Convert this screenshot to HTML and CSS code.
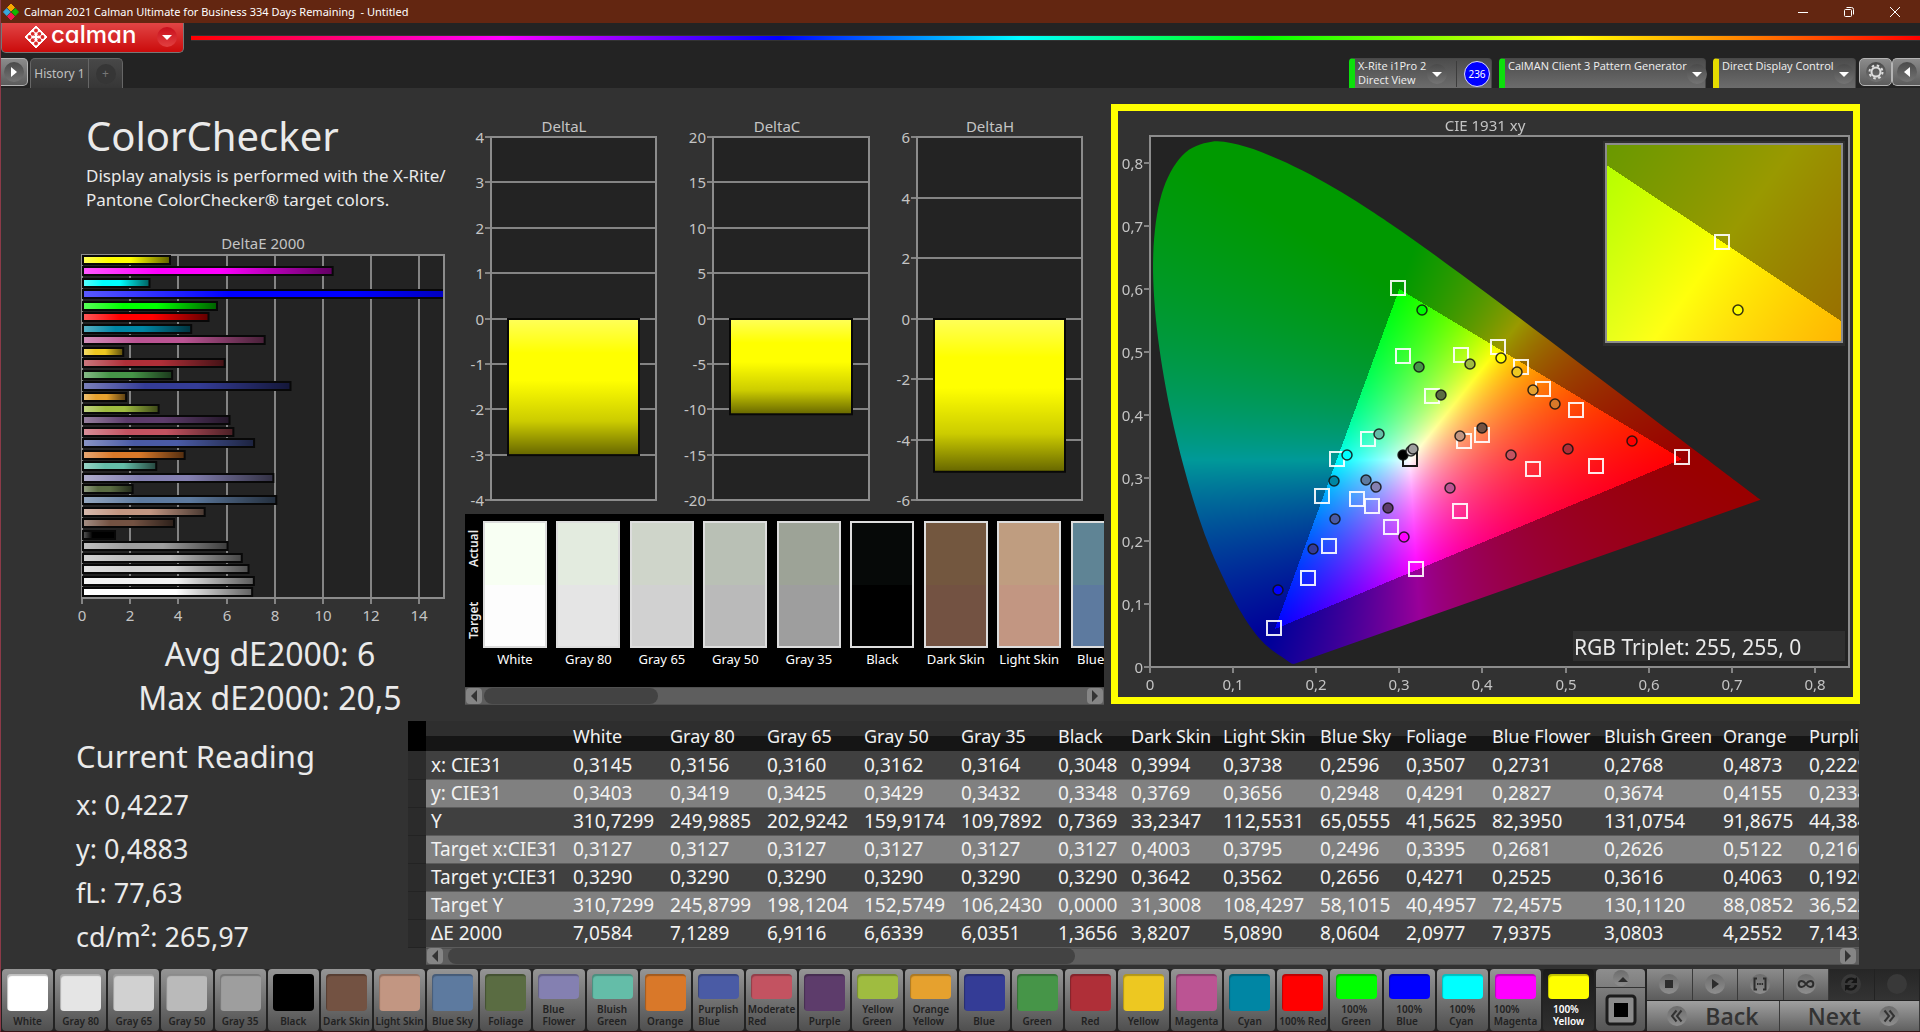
FILE: index.html
```html
<!DOCTYPE html>
<html lang="en">
<head>
<meta charset="utf-8">
<meta name="viewport" content="width=device-width, initial-scale=1">
<title>Calman 2021 Calman Ultimate for Business 334 Days Remaining - Untitled</title>
<link rel="stylesheet" href="styles.css">
</head>
<body>
<header class="titlebar">
  <svg class="app-icon" viewBox="0 0 16 16" aria-hidden="true">
    <path d="M8 0l3.500 3.500L8 7 4.500 3.500z" fill="#f5a800" stroke="#f5a800" stroke-linejoin="round"/>
    <path d="M3.800 4.500L7.300 8l-3.500 3.500L.5 8z" fill="#38a8e0" stroke="#38a8e0" stroke-linejoin="round"/>
    <path d="M12.200 4.500L15.500 8l-3.300 3.500L8.700 8z" fill="#0fb800" stroke="#0fb800" stroke-linejoin="round"/>
    <path d="M8 9l3.500 3.500L8 16l-3.500-3.500z" fill="#f01850" stroke="#f01850" stroke-linejoin="round"/>
  </svg>
  <span class="title">Calman 2021 Calman Ultimate for Business 334 Days Remaining &nbsp;- Untitled</span>
  <div class="window-buttons">
    <button aria-label="Minimize"><svg viewBox="0 0 12 12"><path d="M1 6.500h10"/></svg></button>
    <button aria-label="Restore"><svg viewBox="0 0 12 12"><rect x="1.500" y="3.500" width="7" height="7" rx="1"/><path d="M3.500 1.500h5a2 2 0 0 1 2 2v5"/></svg></button>
    <button aria-label="Close"><svg viewBox="0 0 12 12"><path d="M1 1l10 10M11 1L1 11"/></svg></button>
  </div>
</header>

<div class="topbar">
  <div class="brand-row">
    <button class="brand" aria-label="Calman menu">
      <svg class="brand-mark" viewBox="0 0 24 24" aria-hidden="true">
        <path d="M12 1l11 11-11 11L1 12z" fill="#fff" stroke="#fff" stroke-linejoin="round"/>
        <g fill="#da2a2a"><circle cx="12" cy="5.500" r="1.900"/><circle cx="5.500" cy="12" r="1.900"/><circle cx="18.500" cy="12" r="1.900"/><circle cx="12" cy="18.500" r="1.900"/></g>
        <path d="M8.700 8.800l6.600 6.400M15.300 8.800l-6.600 6.400" stroke="#da2a2a" stroke-width="1"/>
        <g fill="#da2a2a"><circle cx="8.700" cy="8.800" r="1.900"/><circle cx="15.300" cy="8.800" r="1.900"/><circle cx="8.700" cy="15.200" r="1.900"/><circle cx="15.300" cy="15.200" r="1.900"/></g>
        <circle cx="12" cy="12" r="1.900" fill="#fff"/>
      </svg>
      <span class="wordmark">calman</span>
      <span class="knob knob-red"><svg viewBox="0 0 20 20"><path d="M5 8h10l-5 5z"/></svg></span>
    </button>
    <div class="spectrum"></div>
  </div>
  <nav class="tab-row">
    <button class="side-button" aria-label="Expand"><span class="knob"><svg viewBox="0 0 20 20"><path d="M7 5v10l6-5z"/></svg></span></button>
    <div class="history">
      <button class="history-tab">History 1</button>
      <button class="history-add" aria-label="Add history"><span class="knob knob-dark">+</span></button>
    </div>
    <div class="devices">
      <div class="device device-meter">
        <span class="device-name">X-Rite i1Pro 2<br>Direct View</span>
        <button class="knob" aria-label="Meter menu"><svg viewBox="0 0 20 20"><path d="M5 8h10l-5 5z"/></svg></button>
        <span class="divider"></span>
        <span class="counter">236</span>
      </div>
      <div class="device device-source">
        <span class="device-name">CalMAN Client 3 Pattern Generator</span>
        <button class="knob" aria-label="Source menu"><svg viewBox="0 0 20 20"><path d="M5 8h10l-5 5z"/></svg></button>
      </div>
      <div class="device device-display">
        <span class="device-name">Direct Display Control</span>
        <button class="knob" aria-label="Display menu"><svg viewBox="0 0 20 20"><path d="M5 8h10l-5 5z"/></svg></button>
      </div>
      <button class="side-button" aria-label="Settings"><span class="knob"><svg viewBox="0 0 20 20"><circle cx="10" cy="10" r="4.500" fill="none" stroke="#ddd" stroke-width="2"/><circle cx="10" cy="10" r="6.500" fill="none" stroke="#ddd" stroke-width="2" stroke-dasharray="2.500 2.600"/></svg></span></button>
      <button class="side-button" aria-label="Collapse"><span class="knob"><svg viewBox="0 0 20 20"><path d="M13 5v10l-6-5z"/></svg></span></button>
    </div>
  </nav>
</div>

<main>
  <div class="analysis">
    <section class="summary">
      <h1>ColorChecker</h1>
      <p class="lead">Display analysis is performed with the X-Rite/<br>Pantone ColorChecker® target colors.</p>
      <svg class="delta-e" id="delta-e" viewBox="60 230 400 400" role="img" aria-label="DeltaE 2000">
        <defs>
          <linearGradient id="gloss-h"><stop offset="0" stop-color="#fff" stop-opacity=".35"/><stop offset=".3" stop-color="#fff" stop-opacity="0"/><stop offset=".55" stop-color="#000" stop-opacity="0"/><stop offset="1" stop-color="#000" stop-opacity=".62"/></linearGradient>
          <linearGradient id="gloss-v" x2="0" y2="1"><stop offset="0" stop-color="#fff" stop-opacity=".35"/><stop offset=".25" stop-color="#fff" stop-opacity="0"/><stop offset=".45" stop-color="#000" stop-opacity="0"/><stop offset=".75" stop-color="#000" stop-opacity=".2"/><stop offset="1" stop-color="#000" stop-opacity=".6"/></linearGradient>
          <clipPath id="plot-area"><rect x="82" y="254" width="361" height="346"/></clipPath>
        </defs>
        <text class="chart-title" x="263" y="249">DeltaE 2000</text>
      </svg>
      <div class="stats">
        <p>Avg dE2000: 6</p>
        <p>Max dE2000: 20,5</p>
      </div>
    </section>

    <section class="deltas">
      <div class="delta-charts">
        <svg class="delta" viewBox="465 112 213 396" data-left="491" data-right="656" data-max="4" data-step="1" data-value="-3" data-title="DeltaL" data-title-x="564"></svg>
        <svg class="delta" viewBox="678 112 213 396" data-left="713" data-right="869" data-max="20" data-step="5" data-value="-10.500" data-title="DeltaC" data-title-x="777"></svg>
        <svg class="delta" viewBox="891 112 213 396" data-left="917" data-right="1082" data-max="6" data-step="2" data-value="-5.050" data-title="DeltaH" data-title-x="990"></svg>
      </div>
      <div class="comparison">
        <div class="strip">
          <div class="strip-axis"><span>Target</span><span>Actual</span></div>
          <figure><div class="pair" style="--actual:#f8fff3;--target:#fdfdfd"></div><figcaption>White</figcaption></figure>
          <figure><div class="pair" style="--actual:#e3ebdf;--target:#e5e5e5"></div><figcaption>Gray 80</figcaption></figure>
          <figure><div class="pair" style="--actual:#cfd5ca;--target:#d1d1d1"></div><figcaption>Gray 65</figcaption></figure>
          <figure><div class="pair" style="--actual:#b9c0b5;--target:#bababa"></div><figcaption>Gray 50</figcaption></figure>
          <figure><div class="pair" style="--actual:#9da397;--target:#9e9e9e"></div><figcaption>Gray 35</figcaption></figure>
          <figure><div class="pair" style="--actual:#060908;--target:#000"></div><figcaption>Black</figcaption></figure>
          <figure><div class="pair" style="--actual:#73573f;--target:#735242"></div><figcaption>Dark Skin</figcaption></figure>
          <figure><div class="pair" style="--actual:#bf9d80;--target:#c29682"></div><figcaption>Light Skin</figcaption></figure>
          <figure><div class="pair" style="--actual:#5f8495;--target:#5d7a9f"></div><figcaption>Blue Sky</figcaption></figure>
        </div>
        <div class="scrollbar scroll-strip">
          <button aria-label="Scroll left"><svg viewBox="0 0 16 16"><path d="M11 2v12L5 8z"/></svg></button>
          <span class="track"><span class="thumb"></span></span>
          <button aria-label="Scroll right"><svg viewBox="0 0 16 16"><path d="M5 2v12l6-6z"/></svg></button>
        </div>
      </div>
    </section>

    <section class="cie">
      <div class="cie-frame">
        <canvas class="cie-layer" id="gamut" width="735" height="586"></canvas>
        <svg class="cie-layer" id="cie" viewBox="1118 111 735 586" role="img" aria-label="CIE 1931 xy"></svg>
      </div>
    </section>
  </div>

  <div class="readings">
    <section class="current">
      <h2>Current Reading</h2>
      <p>x: 0,4227</p>
      <p>y: 0,4883</p>
      <p>fL: 77,63</p>
      <p>cd/m²: 265,97</p>
    </section>
    <section class="data">
      <div class="data-clip">
        <table>
          <colgroup><col class="w-sel"><col class="w-label"><col class="w-gray"><col class="w-gray"><col class="w-gray"><col class="w-gray"><col class="w-gray"><col class="w-black"><col class="w-dark"><col class="w-gray"><col class="w-short"><col class="w-short"><col class="w-flower"><col class="w-green"><col class="w-short"><col class="w-rest"></colgroup>
          <thead>
            <tr><th class="sel"></th><th></th><th>White</th><th>Gray 80</th><th>Gray 65</th><th>Gray 50</th><th>Gray 35</th><th>Black</th><th>Dark Skin</th><th>Light Skin</th><th>Blue Sky</th><th>Foliage</th><th>Blue Flower</th><th>Bluish Green</th><th>Orange</th><th>Purplish Blue</th></tr>
          </thead>
          <tbody>
            <tr><td class="sel"></td><th scope="row">x: CIE31</th><td>0,3145</td><td>0,3156</td><td>0,3160</td><td>0,3162</td><td>0,3164</td><td>0,3048</td><td>0,3994</td><td>0,3738</td><td>0,2596</td><td>0,3507</td><td>0,2731</td><td>0,2768</td><td>0,4873</td><td>0,2229</td></tr>
            <tr><td class="sel"></td><th scope="row">y: CIE31</th><td>0,3403</td><td>0,3419</td><td>0,3425</td><td>0,3429</td><td>0,3432</td><td>0,3348</td><td>0,3769</td><td>0,3656</td><td>0,2948</td><td>0,4291</td><td>0,2827</td><td>0,3674</td><td>0,4155</td><td>0,2334</td></tr>
            <tr><td class="sel"></td><th scope="row">Y</th><td>310,7299</td><td>249,9885</td><td>202,9242</td><td>159,9174</td><td>109,7892</td><td>0,7369</td><td>33,2347</td><td>112,5531</td><td>65,0555</td><td>41,5625</td><td>82,3950</td><td>131,0754</td><td>91,8675</td><td>44,3840</td></tr>
            <tr><td class="sel"></td><th scope="row">Target x:CIE31</th><td>0,3127</td><td>0,3127</td><td>0,3127</td><td>0,3127</td><td>0,3127</td><td>0,3127</td><td>0,4003</td><td>0,3795</td><td>0,2496</td><td>0,3395</td><td>0,2681</td><td>0,2626</td><td>0,5122</td><td>0,2160</td></tr>
            <tr><td class="sel"></td><th scope="row">Target y:CIE31</th><td>0,3290</td><td>0,3290</td><td>0,3290</td><td>0,3290</td><td>0,3290</td><td>0,3290</td><td>0,3642</td><td>0,3562</td><td>0,2656</td><td>0,4271</td><td>0,2525</td><td>0,3616</td><td>0,4063</td><td>0,1920</td></tr>
            <tr><td class="sel"></td><th scope="row">Target Y</th><td>310,7299</td><td>245,8799</td><td>198,1204</td><td>152,5749</td><td>106,2430</td><td>0,0000</td><td>31,3008</td><td>108,4297</td><td>58,1015</td><td>40,4957</td><td>72,4575</td><td>130,1120</td><td>88,0852</td><td>36,5220</td></tr>
            <tr><td class="sel"></td><th scope="row">ΔE 2000</th><td>7,0584</td><td>7,1289</td><td>6,9116</td><td>6,6339</td><td>6,0351</td><td>1,3656</td><td>3,8207</td><td>5,0890</td><td>8,0604</td><td>2,0977</td><td>7,9375</td><td>3,0803</td><td>4,2552</td><td>7,1432</td></tr>
          </tbody>
        </table>
      </div>
      <div class="scrollbar scroll-table">
        <button aria-label="Scroll left"><svg viewBox="0 0 16 16"><path d="M11 2v12L5 8z"/></svg></button>
        <span class="track"><span class="thumb"></span></span>
        <button aria-label="Scroll right"><svg viewBox="0 0 16 16"><path d="M5 2v12l6-6z"/></svg></button>
      </div>
    </section>
  </div>
</main>

<footer>
  <div class="patches">
    <button class="patch"><i style="--c:#fff"></i><span>White</span></button>
    <button class="patch"><i style="--c:#e5e5e5"></i><span>Gray 80</span></button>
    <button class="patch"><i style="--c:#d1d1d1"></i><span>Gray 65</span></button>
    <button class="patch"><i style="--c:#bababa"></i><span>Gray 50</span></button>
    <button class="patch"><i style="--c:#9e9e9e"></i><span>Gray 35</span></button>
    <button class="patch"><i style="--c:#000"></i><span>Black</span></button>
    <button class="patch"><i style="--c:#735242"></i><span>Dark Skin</span></button>
    <button class="patch"><i style="--c:#c29682"></i><span>Light Skin</span></button>
    <button class="patch"><i style="--c:#5d7a9f"></i><span>Blue Sky</span></button>
    <button class="patch"><i style="--c:#5a6c42"></i><span>Foliage</span></button>
    <button class="patch"><i style="--c:#8480b1"></i><span>Blue<br>Flower</span></button>
    <button class="patch"><i style="--c:#64bda8"></i><span>Bluish<br>Green</span></button>
    <button class="patch"><i style="--c:#d97829"></i><span>Orange</span></button>
    <button class="patch"><i style="--c:#4a5ba5"></i><span>Purplish<br>Blue</span></button>
    <button class="patch"><i style="--c:#c35361"></i><span>Moderate<br>Red</span></button>
    <button class="patch"><i style="--c:#5d3c6b"></i><span>Purple</span></button>
    <button class="patch"><i style="--c:#9fbc40"></i><span>Yellow<br>Green</span></button>
    <button class="patch"><i style="--c:#e6a12e"></i><span>Orange<br>Yellow</span></button>
    <button class="patch"><i style="--c:#343c96"></i><span>Blue</span></button>
    <button class="patch"><i style="--c:#469548"></i><span>Green</span></button>
    <button class="patch"><i style="--c:#af2f38"></i><span>Red</span></button>
    <button class="patch"><i style="--c:#edc821"></i><span>Yellow</span></button>
    <button class="patch"><i style="--c:#bb5493"></i><span>Magenta</span></button>
    <button class="patch"><i style="--c:#0086a4"></i><span>Cyan</span></button>
    <button class="patch"><i style="--c:#f00"></i><span>100% Red</span></button>
    <button class="patch"><i style="--c:#0f0"></i><span>100%<br>Green</span></button>
    <button class="patch"><i style="--c:#00f"></i><span>100%<br>Blue</span></button>
    <button class="patch"><i style="--c:#0ff"></i><span>100%<br>Cyan</span></button>
    <button class="patch"><i style="--c:#f0f"></i><span>100%<br>Magenta</span></button>
    <button class="patch selected"><i style="--c:#ff0"></i><span>100%<br>Yellow</span></button>
  </div>
  <div class="window-picker">
    <button class="picker-up" aria-label="Show patterns"><span class="knob"><svg viewBox="0 0 20 20"><path d="M5 12h10l-5-5z"/></svg></span></button>
    <button class="picker-size" aria-label="Pattern window"><svg viewBox="0 0 32 32"><rect x="2" y="2" width="28" height="28" rx="3" fill="#8b8b8b" stroke="#1c1c1c" stroke-width="3"/><rect x="9" y="9" width="14" height="14" fill="#000"/></svg></button>
  </div>
  <div class="transport">
    <div class="transport-row">
      <button aria-label="Stop"><span class="knob"><svg viewBox="0 0 20 20"><path d="M6 6h8v8H6z"/></svg></span></button>
      <button aria-label="Play"><span class="knob"><svg viewBox="0 0 20 20"><path d="M7 5v10l7-5z"/></svg></span></button>
      <button aria-label="Read series"><span class="knob"><svg viewBox="0 0 20 20"><path d="M7 4.500H4.500v11H7M13 4.500h2.500v11H13M7 10h1.500M9.300 10h1.500M11.600 10h1.500" fill="none" stroke="#2c2c2c" stroke-width="2"/></svg></span></button>
      <button aria-label="Continuous"><span class="knob"><svg viewBox="0 0 20 20"><path d="M10 10c-2-2.600-3-3-4.300-3a3 3 0 0 0 0 6C7 13 8 12.600 10 10s3-3 4.300-3a3 3 0 0 1 0 6C13 13 12 12.600 10 10z" fill="none" stroke="#2c2c2c" stroke-width="2"/></svg></span></button>
      <button class="off" aria-label="Refresh" disabled><span class="knob"><svg viewBox="0 0 20 20"><path d="M5 9a5.500 5.500 0 0 1 9-3M15 11a5.500 5.500 0 0 1-9 3" fill="none" stroke="#151515" stroke-width="2.400"/><path d="M16 3v6h-6zM4 17v-6h6z" fill="#151515"/></svg></span></button>
      <button class="off" aria-label="Unused" disabled><span class="knob"></span></button>
    </div>
    <div class="transport-row nav">
      <button><span class="knob"><svg viewBox="0 0 20 20"><path d="M9.500 4.500L5 10l4.500 5.500M14.500 4.500L10 10l4.500 5.500" fill="none" stroke="#333" stroke-width="2"/></svg></span>Back</button>
      <button>Next<span class="knob"><svg viewBox="0 0 20 20"><path d="M5.500 4.500L10 10l-4.500 5.500M10.500 4.500L15 10l-4.500 5.500" fill="none" stroke="#333" stroke-width="2"/></svg></span></button>
    </div>
  </div>
</footer>
<script src="charts.js"></script>
</body>
</html>
```
FILE: styles.css
```css
* { box-sizing: border-box; margin: 0; padding: 0; }
html { background: #232323; }
body {
  min-height: 100vh;
  display: flex;
  flex-direction: column;
  border-left: 1px solid #8c3a48;
  border-bottom: 1px solid #3a1216;
  background: #323232;
  color: #eaeaea;
  font-family: "Noto Sans", "Open Sans", sans-serif;
  overflow-x: hidden;
}
button { font: inherit; color: inherit; border: 0; background: none; }
svg { display: block; }

/* window title */
.titlebar { display: flex; align-items: center; height: 23px; padding-left: 2px; background: #632611; color: #fff; }
.app-icon { width: 16px; height: 16px; }
.title { flex: 1; margin-left: 5px; font: 11px/20px "Noto Sans", sans-serif; }
.window-buttons { display: flex; padding-right: 2px; }
.window-buttons button { width: 46px; height: 20px; display: grid; place-items: center; }
.window-buttons svg { width: 12px; height: 12px; fill: none; stroke: #fff; }

/* round glossy knobs */
.knob {
  flex: none; display: grid; place-items: center;
  width: 20px; height: 20px; border-radius: 50%;
  background: linear-gradient(#4a4a4a, #747474);
}
.knob svg { width: 20px; height: 20px; fill: #fff; }
.knob-red { background: linear-gradient(#c80f1c, #e24040); }
.knob-dark { background: #363636; color: #777; font-size: 12px; line-height: 20px; }

/* brand and tabs */
.topbar { background: #232323; }
.brand-row { display: flex; height: 35px; }
.brand {
  display: flex; align-items: center; gap: 3px;
  width: 183px; height: 30px; padding: 0 6px 2px 22px;
  background: linear-gradient(#e14545, #cb0b0b);
  border: 1px solid #777; border-top: 0; border-radius: 0 0 5px 5px;
}
.brand-mark { width: 24px; height: 24px; }
.wordmark { flex: 1; text-align: left; color: #fff; font: 500 24px/24px Inter, sans-serif; font-feature-settings: "cv11"; padding-bottom: 3px; }
.spectrum {
  flex: 1; height: 6px; margin: 12px 0 0 7px;
  border: solid #333; border-width: 1px 0;
  background: linear-gradient(90deg, #f00, #f0f 18%, #00f 34%, #0ff 48%, #0f0 62%, #ff0 80%, #f00);
}
.tab-row { display: flex; height: 30px; }
.side-button {
  display: grid; place-items: center; width: 28px; height: 28px;
  border: 1px solid #b4b4b4; border-radius: 5px; background: linear-gradient(#8b8b8b, #5c5c5c);
}
.tab-row > .side-button { border-left: 0; border-radius: 0 5px 5px 0; width: 27px; }
.history { display: flex; margin-left: 2px; border: 1px solid #666; border-bottom: 0; border-radius: 5px 5px 0 0; background: linear-gradient(#484848, #363636); }
.history-tab { width: 58px; font-size: 12px; color: #c0c0c0; border-right: 1px solid #666; }
.history-add { width: 33px; display: grid; place-items: center; }
.devices { display: flex; margin-left: auto; }
.device {
  display: flex; align-items: center; margin-right: 7px; padding-right: 5px;
  border: 1px solid #484848; border-bottom: 0; border-left: 6px solid #0ce00c; border-radius: 4px 4px 0 0;
  background: linear-gradient(#4c4c4c, #6c6c6c);
}
.device-name { align-self: flex-start; flex: 1; padding-left: 3px; font: 11px/14px "Open Sans", sans-serif; color: #f0f0f0; white-space: nowrap; }
.device-meter { width: 143px; padding-right: 1px; }
.device-source { width: 207px; }
.device-display { width: 143px; border-left-color: #e6dc00; margin-right: 3px; }
.divider { width: 1px; height: 26px; margin-left: 9px; background: #3c3c3c; }
.counter {
  width: 26px; height: 26px; margin-left: 7px; border: 1px solid #d8d8ff; border-radius: 50%;
  background: #00f; color: #fff; font-size: 10px; line-height: 24px; text-align: center;
}
.devices .side-button { width: 33px; }
.devices .side-button:last-child { border-right: 0; border-radius: 5px 0 0 5px; width: 28px; }

/* upper workspace */
main { flex: 1; padding-bottom: 4px; }
.analysis { display: grid; grid-template-columns: 464fr 639fr 756fr; padding-right: 60px; }
.analysis > * { min-width: 0; }
.summary { padding-top: 24px; }
h1 { padding-left: 85px; font-size: 40px; line-height: 48px; font-weight: 400; }
.lead { margin-top: 4px; padding-left: 85px; font-size: 17px; line-height: 24px; white-space: nowrap; }
.delta-e { width: calc(100% - 64px); margin: 18px 0 0 59px; }
.stats { padding: 2px 0 1px 74px; text-align: center; font-size: 32px; line-height: 44px; }
.chart-title { font-size: 15px; fill: #c4c4c4; text-anchor: middle; }
.tick { font-size: 15px; fill: #c4c4c4; }
.triplet { font-size: 21px; fill: #eaeaea; }
.middle { text-anchor: middle; }
.end { text-anchor: end; }
.plot { fill: #232323; }
.frame { fill: none; stroke: #8c8c8c; stroke-width: 2; }
.grid { stroke: #848484; stroke-width: 2; }

.deltas { padding-top: 24px; }
.delta-charts { display: grid; grid-template-columns: repeat(3, 1fr); }
.delta { width: 100%; }
.comparison { margin-top: 6px; }
.strip { display: flex; height: 173px; padding-top: 7px; background: #000; overflow: hidden; }
.strip-axis { flex: none; display: flex; width: 18px; height: 127px; padding: 9px 0; justify-content: space-between; writing-mode: vertical-rl; transform: rotate(180deg); font: 600 12px/18px "Noto Sans", sans-serif; }
.strip figure { flex: none; width: 10%; margin-right: 1.5%; }
.pair { height: 127px; border: 2px solid #ddd; background: linear-gradient(var(--actual) 50%, var(--target) 50%); }
.strip figcaption { display: flex; justify-content: center; font-size: 13px; line-height: 23px; color: #fff; white-space: nowrap; }

.scrollbar { display: flex; align-items: center; gap: 2px; height: 18px; padding: 0 1px; background: #5e5e5e; border: solid #505050; border-width: 1px 0; }
.scrollbar button { width: 16px; height: 16px; border-radius: 4px; background: #858585; }
.scrollbar svg { width: 16px; height: 16px; fill: #333; }
.track { flex: 1; }
.thumb { display: block; height: 16px; border-radius: 8px; background: #434343; }
.scroll-strip .thumb { width: 29%; }
.scroll-table { height: 17px; margin-left: 18px; padding-right: 3px; }
.scroll-table .thumb { width: 45%; margin-left: 3px; }

.cie { padding: 16px 0 0 7px; }
.cie-frame { display: grid; border: 7px solid #ff0; background: #323232; }
.cie-layer { grid-area: 1 / 1; width: 100%; height: auto; }

/* lower workspace */
.readings { display: grid; grid-template-columns: 407fr 1451fr; padding-right: 61px; }
.readings > * { min-width: 0; }
.current { padding: 13px 0 0 75px; font-size: 27px; line-height: 44px; }
.current h2 { margin-bottom: 5px; font-size: 31px; font-weight: 400; }
.data-clip { overflow: hidden; }
table { width: 1484px; table-layout: fixed; border-collapse: collapse; font-size: 19px; color: #f2f2f2; }
.w-sel { width: 18px; }
.w-label { width: 142px; }
.w-gray { width: 97px; }
.w-black { width: 73px; }
.w-dark { width: 92px; }
.w-short { width: 86px; }
.w-flower { width: 112px; }
.w-green { width: 119px; }
.w-rest { width: 88px; }
th, td { height: 28px; padding-left: 5px; line-height: 24px; text-align: left; font-weight: 400; white-space: nowrap; }
thead th { height: 30px; font-size: 18px; background: linear-gradient(#2e2e2e 50%, #151515 50%); }
thead .sel { background: #000; }
tbody tr { background: #404040; border-bottom: 1px solid #5c5c5c; }
tbody tr:nth-child(even) { background: #808080; }
tbody .sel { background: #2b2b2b; border-bottom: 1px solid #232323; }

/* pattern bar */
footer { display: flex; gap: 2px; height: 62px; background: #232323; padding-left: 1px; }
.patches { flex: 1593; display: grid; grid-template-columns: repeat(30, minmax(0, 1fr)); gap: 2px; }
.patch {
  display: flex; flex-direction: column; align-items: center; gap: 4px; height: 62px; padding: 5px 0 4px;
  border-radius: 4px; background: linear-gradient(#959595, #4f4f4f);
  color: #222; font-size: 10px; font-weight: 600; line-height: 12px; white-space: nowrap;
}
.patch i { flex: 1; width: 41px; border-radius: 4px; background: var(--c); box-shadow: inset 1px 2px 1px rgba(0, 0, 0, .25); }
.patch span { text-align: left; }
.patch.selected { background: linear-gradient(#1a1a1a, #303030); color: #fff; }
.window-picker { flex: 49; display: flex; flex-direction: column; border-radius: 4px; overflow: hidden; background: linear-gradient(#8e8e8e, #555); }
.picker-up { height: 19px; display: grid; place-items: center; border-bottom: 1px solid #333; }
.picker-up .knob { width: 16px; height: 16px; }
.picker-size { flex: 1; display: grid; place-items: center; }
.picker-size svg { width: 32px; height: 32px; }
.transport { flex: 273; display: flex; flex-direction: column; gap: 1px; }
.transport-row { flex: 1; display: flex; }
.transport-row button { flex: 1; display: grid; place-items: center; background: linear-gradient(#8c8c8c, #5c5c5c); border-right: 1px solid #3a3a3a; }
.transport-row .off { background: linear-gradient(#262626, #333); border-right-color: #222; }
.window-picker .knob, .transport .knob { background: linear-gradient(#6c6c6c, #8e8e8e); }
.window-picker .knob svg, .transport .knob svg { fill: #2c2c2c; }
.transport .off .knob { background: #393939; }
.transport .nav button { display: flex; align-items: center; justify-content: center; gap: 18px; font: 600 23px/28px "Open Sans", sans-serif; color: #333; background: linear-gradient(#a0a0a0, #606060); }
.transport .nav button:last-child { padding-left: 8px; }
```
FILE: charts.js
```js
const NS = "http://www.w3.org/2000/svg";
function add(parent, name, attrs, text) {
  const node = document.createElementNS(NS, name);
  for (const key in attrs) node.setAttribute(key, attrs[key]);
  if (text !== undefined) node.textContent = text;
  parent.appendChild(node);
  return node;
}

/* DeltaE 2000 per patch, top to bottom */
const deltaE = [
  [3.65, "#ff0"], [10.4, "#f0f"], [2.8, "#0ff"], [20.5, "#00f"], [5.6, "#0f0"], [5.25, "#f00"],
  [4.53, "#0086a4"], [7.58, "#bb5493"], [1.71, "#edc821"], [5.92, "#af2f38"], [3.74, "#469548"],
  [8.65, "#343c96"], [1.83, "#e6a12e"], [3.18, "#9fbc40"], [6.12, "#5d3c6b"], [6.28, "#c35361"],
  [7.14, "#4a5ba5"], [4.26, "#d97829"], [3.08, "#64bda8"], [7.94, "#8480b1"], [2.1, "#5a6c42"],
  [8.06, "#5d7a9f"], [5.09, "#c29682"], [3.82, "#735242"], [1.37, "#000"], [6.04, "#9e9e9e"],
  [6.63, "#bababa"], [6.91, "#d1d1d1"], [7.13, "#f0f0f0"], [7.06, "#fff"]
];
(function drawDeltaE() {
  const svg = document.getElementById("delta-e");
  const left = 82, right = 444, top = 255, bottom = 598, unit = 24.1;
  add(svg, "rect", { class: "plot", x: left, y: top, width: right - left, height: bottom - top });
  for (let v = 0; v <= 14; v += 2) {
    const x = Math.round(left + v * unit);
    add(svg, "line", { class: "grid", x1: x, x2: x, y1: top, y2: bottom + 6 });
    add(svg, "text", { class: "tick middle", x: x, y: 621 }, v);
  }
  add(svg, "rect", { class: "frame", x: left, y: top, width: right - left, height: bottom - top });
  const bars = add(svg, "g", { "clip-path": "url(#plot-area)" });
  deltaE.forEach(([value, color], i) => {
    const box = { x: left + 1, y: Math.round(256 + i * 11.45), width: value * unit - 1, height: 8 };
    add(bars, "rect", { ...box, fill: color });
    add(bars, "rect", { ...box, fill: "url(#gloss-h)", stroke: "#080808", "stroke-width": 2 });
  });
})();

document.querySelectorAll(".delta").forEach(svg => {
  const d = svg.dataset;
  const left = +d.left, right = +d.right, max = +d.max, top = 137, bottom = 500;
  const y = v => top + (max - v) / (2 * max) * (bottom - top);
  add(svg, "text", { class: "chart-title", x: d.titleX, y: 132 }, d.title);
  add(svg, "rect", { class: "plot", x: left, y: top, width: right - left, height: bottom - top });
  for (let v = max; v >= -max; v -= +d.step) {
    const row = Math.round(y(v));
    add(svg, "line", { class: "grid", x1: left - 6, x2: right, y1: row, y2: row });
    add(svg, "text", { class: "tick end", x: left - 7, y: row + 6 }, v);
  }
  add(svg, "rect", { class: "frame", x: left, y: top, width: right - left, height: bottom - top });
  const box = { x: left + 17, y: Math.round(y(0)), width: right - left - 34, height: y(+d.value) - y(0) };
  add(svg, "rect", { ...box, fill: "#ff0" });
  add(svg, "rect", { ...box, fill: "url(#gloss-v)", stroke: "#080808", "stroke-width": 2 });
});

/* spectral locus, CIE 1931 xy */
const locus = [
  [.1741, .005], [.1714, .0051], [.1689, .0069], [.1644, .0109], [.1566, .0177], [.144, .0297],
  [.1355, .0399], [.1241, .0578], [.1096, .0868], [.0913, .1327], [.0687, .2007], [.0454, .295],
  [.0235, .4127], [.0082, .5384], [.0039, .6548], [.0139, .7502], [.0389, .812], [.0743, .8338],
  [.1142, .8262], [.1547, .8059], [.1929, .7816], [.2296, .7543], [.2658, .7243], [.3016, .6923],
  [.3731, .6245], [.4441, .5547], [.5125, .4866], [.5752, .4242], [.627, .3725], [.6658, .334],
  [.6915, .3083], [.7347, .2653]
];
function colorAt(x, y) {
  const X = x / y, Z = (1 - x - y) / y;
  const rgb = [
    3.2406 * X - 1.5372 - .4986 * Z,
    -.9689 * X + 1.8758 + .0415 * Z,
    .0557 * X - .204 + 1.057 * Z
  ];
  const level = (Math.min(...rgb) < 0 ? 153 : 255) / Math.max(...rgb);
  return rgb.map(c => Math.max(0, c) * level);
}
function paint(width, height, x0, x1, y0, y1) {
  const canvas = document.createElement("canvas");
  canvas.width = width;
  canvas.height = height;
  const ctx = canvas.getContext("2d");
  const image = ctx.createImageData(width, height);
  for (let j = 0; j < height; j++) {
    for (let i = 0; i < width; i++) {
      const y = Math.max(.001, y1 - (j + .5) / height * (y1 - y0));
      const c = colorAt(x0 + (i + .5) / width * (x1 - x0), y);
      image.data.set([c[0], c[1], c[2], 255], (j * width + i) * 4);
    }
  }
  ctx.putImageData(image, 0, 0);
  return canvas;
}
const px = x => 1150 + 831 * x;
const py = y => 667 - 630 * y;
(function drawGamut() {
  const ctx = document.getElementById("gamut").getContext("2d");
  ctx.translate(-1118, -111);
  ctx.fillStyle = "#232323";
  ctx.fillRect(1150, 136, 699, 531);
  ctx.save();
  ctx.beginPath();
  const p = locus.map(([x, y]) => [px(x), py(y)]);
  ctx.moveTo(p[0][0], p[0][1]);
  for (let i = 0; i < p.length - 1; i++) {
    const a = p[Math.max(0, i - 1)], b = p[i], c = p[i + 1], d = p[Math.min(p.length - 1, i + 2)];
    ctx.bezierCurveTo(b[0] + (c[0] - a[0]) / 6, b[1] + (c[1] - a[1]) / 6,
      c[0] - (d[0] - b[0]) / 6, c[1] - (d[1] - b[1]) / 6, c[0], c[1]);
  }
  ctx.closePath();
  ctx.clip();
  ctx.drawImage(paint(699, 531, 0, 699 / 831, 0, 531 / 630), 1150, 136);
  ctx.restore();
  ctx.fillStyle = "#2e2e2e";
  ctx.fillRect(1603, 141, 242, 205);
  ctx.fillStyle = "#8c8c8c";
  ctx.fillRect(1605, 143, 238, 200);
  ctx.drawImage(paint(234, 196, .3943, .4443, .4803, .5303), 1607, 145);
})();

const targets = [
  [1398, 288], [1403, 356], [1461, 355], [1498, 347], [1432, 396], [1368, 439], [1337, 459],
  [1322, 496], [1357, 499], [1372, 506], [1391, 527], [1329, 546], [1308, 578], [1274, 628],
  [1416, 569], [1460, 511], [1464, 441], [1482, 435], [1521, 367], [1543, 389], [1576, 410],
  [1533, 469], [1596, 466], [1682, 457], [1722, 242]
];
const actuals = [
  [1422, 310, "#0f0"], [1419, 367, "#469548"], [1470, 364, "#9fbc40"], [1501, 358, "#ff0"],
  [1441, 395, "#5a6c42"], [1482, 428, "#735242"], [1460, 436, "#c29682"], [1379, 434, "#64bda8"],
  [1347, 455, "#0ff"], [1334, 481, "#0086a4"], [1366, 480, "#5d7a9f"], [1376, 487, "#8480b1"],
  [1388, 508, "#5d3c6b"], [1335, 519, "#4a5ba5"], [1313, 549, "#343c96"], [1278, 590, "#00f"],
  [1404, 537, "#f0f"], [1450, 488, "#bb5493"], [1403, 455, "#000"], [1411, 451, "#d1d1d1"],
  [1413, 449, "#9e9e9e"], [1517, 372, "#edc821"], [1533, 390, "#e6a12e"], [1555, 404, "#d97829"],
  [1511, 455, "#c35361"], [1568, 449, "#af2f38"], [1632, 441, "#f00"], [1738, 310, "#ff0"]
];
(function drawCie() {
  const svg = document.getElementById("cie");
  add(svg, "text", { class: "chart-title", x: 1485, y: 131 }, "CIE 1931 xy");
  add(svg, "rect", { class: "frame", x: 1150, y: 136, width: 699, height: 531 });
  for (let i = 0; i <= 8; i++) {
    const label = i ? "0," + i : "0";
    const x = Math.round(px(i / 10)), y = Math.round(py(i / 10));
    add(svg, "line", { class: "grid", x1: x, x2: x, y1: 667, y2: 673 });
    add(svg, "text", { class: "tick middle", x: x, y: 690 }, label);
    add(svg, "line", { class: "grid", x1: 1144, x2: 1150, y1: y, y2: y });
    add(svg, "text", { class: "tick end", x: 1143, y: y + 6 }, label);
  }
  const square = (x, y, stroke) => add(svg, "rect", { x: x - 7, y: y - 7, width: 14, height: 14, fill: "none", stroke: stroke, "stroke-width": 2, "stroke-opacity": ".9" });
  targets.forEach(([x, y]) => square(x, y, "#fff"));
  square(1410, 459, "#000");
  actuals.forEach(([x, y, fill]) => add(svg, "circle", { cx: x, cy: y, r: 5, fill: fill, stroke: "#111", "stroke-width": "1.500", "stroke-opacity": ".85" }));
  add(svg, "rect", { x: 1573, y: 631, width: 272, height: 30, fill: "#303030" });
  add(svg, "text", { class: "triplet", x: 1574, y: 655 }, "RGB Triplet: 255, 255, 0");
})();
```
